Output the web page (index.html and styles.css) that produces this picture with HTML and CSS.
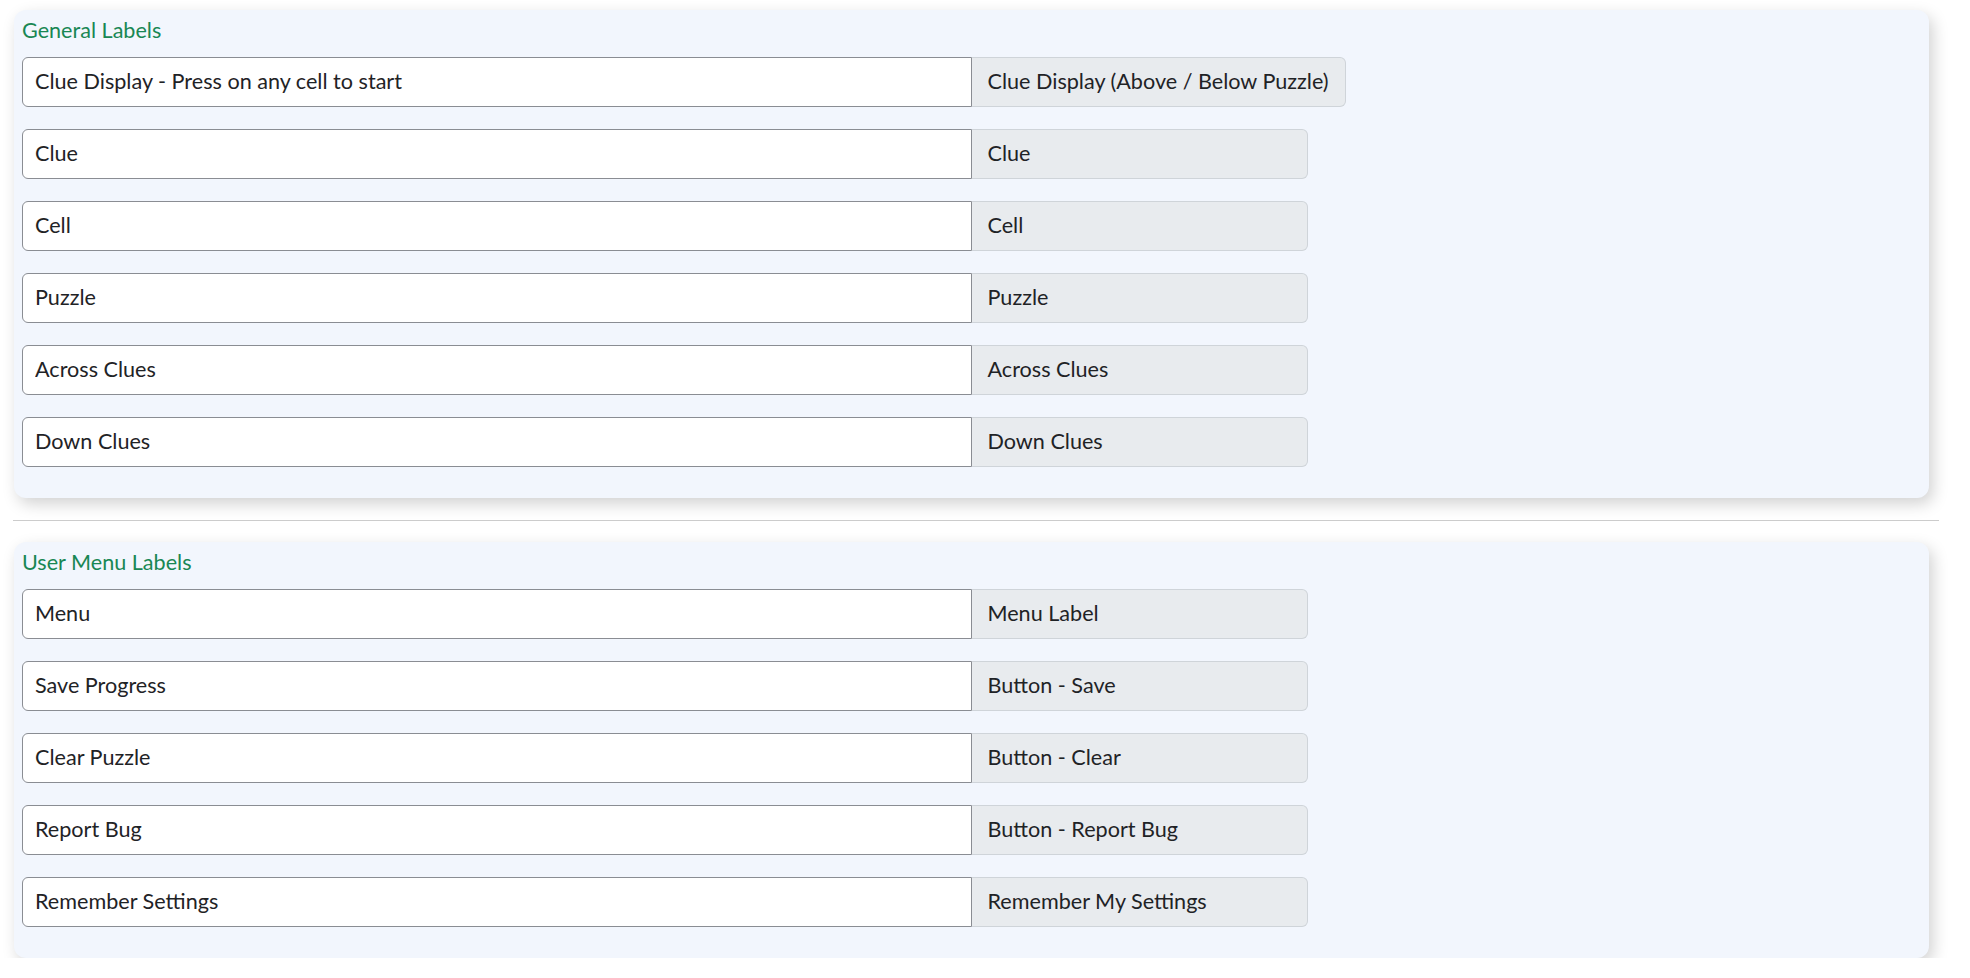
FILE: index.html
```html
<!DOCTYPE html>
<html lang="en">
<head>
<meta charset="utf-8">
<title>Labels</title>
<link rel="stylesheet" href="styles.css">
</head>
<body>
<div class="page">
  <section class="card">
    <h2 class="card-title">General Labels</h2>
    <div class="row"><input class="field" type="text" value="Clue Display - Press on any cell to start"><span class="addon">Clue Display (Above / Below Puzzle)</span></div>
    <div class="row"><input class="field" type="text" value="Clue"><span class="addon">Clue</span></div>
    <div class="row"><input class="field" type="text" value="Cell"><span class="addon">Cell</span></div>
    <div class="row"><input class="field" type="text" value="Puzzle"><span class="addon">Puzzle</span></div>
    <div class="row"><input class="field" type="text" value="Across Clues"><span class="addon">Across Clues</span></div>
    <div class="row"><input class="field" type="text" value="Down Clues"><span class="addon">Down Clues</span></div>
  </section>
  <hr class="divider">
  <section class="card">
    <h2 class="card-title">User Menu Labels</h2>
    <div class="row"><input class="field" type="text" value="Menu"><span class="addon">Menu Label</span></div>
    <div class="row"><input class="field" type="text" value="Save Progress"><span class="addon">Button - Save</span></div>
    <div class="row"><input class="field" type="text" value="Clear Puzzle"><span class="addon">Button - Clear</span></div>
    <div class="row"><input class="field" type="text" value="Report Bug"><span class="addon">Button - Report Bug</span></div>
    <div class="row"><input class="field" type="text" value="Remember Settings"><span class="addon">Remember My Settings</span></div>
  </section>
</div>
</body>
</html>
```

FILE: styles.css
```css
* { box-sizing: border-box; }
html, body { margin: 0; padding: 0; background: #ffffff; }
body {
  font-family: Lato, "Open Sans", "Liberation Sans", sans-serif;
  color: #212529;
}
.page {
  padding: 10px 31px 0 13px;
}
.card {
  background: #f2f6fd;
  border-radius: 12px;
  margin: 0 10px 0 1px;
  padding: 7px 8px 9px 8px;
  box-shadow: 4px 6px 16px rgba(0, 0, 0, 0.18);
}
.card-title {
  margin: 0 0 14px 0;
  font-size: 21.6px;
  line-height: 26px;
  font-weight: 400;
  color: #198754;
}
.row {
  display: flex;
  align-items: stretch;
  height: 50px;
  margin-bottom: 22px;
}
.field {
  width: 50%;
  flex: 0 0 50%;
  height: 50px;
  margin: 0;
  padding: 0 12px 3px 12px;
  font-family: inherit;
  font-size: 21.6px;
  color: #1f2326;
  background: #ffffff;
  border: 1px solid #8a8d93;
  border-radius: 6px 0 0 6px;
  outline: none;
}
.addon {
  display: flex;
  align-items: center;
  min-width: 336px;
  padding: 0 16px 3px 16px;
  font-size: 21.6px;
  color: #1f2326;
  white-space: nowrap;
  background: #e8ebee;
  border: 1px solid #cfd4d9;
  border-left: 0;
  border-radius: 0 6px 6px 0;
}
.divider {
  margin: 22px 0 21px 0;
  border: 0;
  border-top: 1px solid #cccccc;
  height: 0;
}
```
